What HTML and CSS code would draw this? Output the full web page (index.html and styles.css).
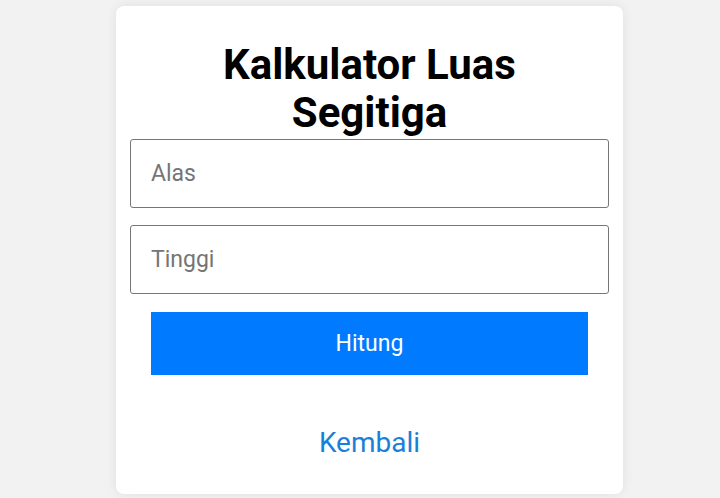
FILE: index.html
```html
<!DOCTYPE html>
<html>
<head>
<meta charset="utf-8">
<link rel="stylesheet" href="styles.css">
</head>
<body>
<div class="card">
  <h1 class="title">Kalkulator Luas Segitiga</h1>
  <form class="form">
    <input class="field" type="text" placeholder="Alas">
    <input class="field" type="text" placeholder="Tinggi">
    <button class="btn" type="button">Hitung</button>
  </form>
  <a class="back" href="#">Kembali</a>
</div>
</body>
</html>
```
FILE: styles.css
```css
html, body {
  margin: 0;
  padding: 0;
}
body {
  background: #f2f2f2;
  font-family: Roboto, "Noto Sans", sans-serif;
  height: 498px;
  overflow: hidden;
}
.card {
  box-sizing: border-box;
  width: 507px;
  height: 488px;
  margin: 6px 0 0 116px;
  background: #fff;
  border-radius: 8px;
  box-shadow: 0 0 12px rgba(0,0,0,0.08);
  padding: 0 14px;
  display: flex;
  flex-direction: column;
  align-items: center;
}
.title {
  margin: 35px 0 0;
  width: 390px;
  text-align: center;
  font-size: 42px;
  font-weight: 700;
  line-height: 48px;
  color: #000;
}
.form {
  width: 100%;
  display: flex;
  flex-direction: column;
  align-items: center;
  gap: 17px;
  margin-top: 2px;
}
.field {
  box-sizing: border-box;
  width: 100%;
  height: 69px;
  border: 1px solid #767676;
  border-radius: 3px;
  padding: 0 20px;
  font-family: Roboto, sans-serif;
  font-size: 23px;
  color: #000;
  outline: none;
}
.field::placeholder {
  color: #757575;
}
.btn {
  width: 437px;
  height: 63px;
  margin-top: 1px;
  border: none;
  background: #007bff;
  color: #fff;
  font-family: Roboto, sans-serif;
  font-size: 23px;
}
.back {
  margin-top: 51px;
  font-size: 28px;
  color: #1a7fd9;
  text-decoration: none;
}
```
